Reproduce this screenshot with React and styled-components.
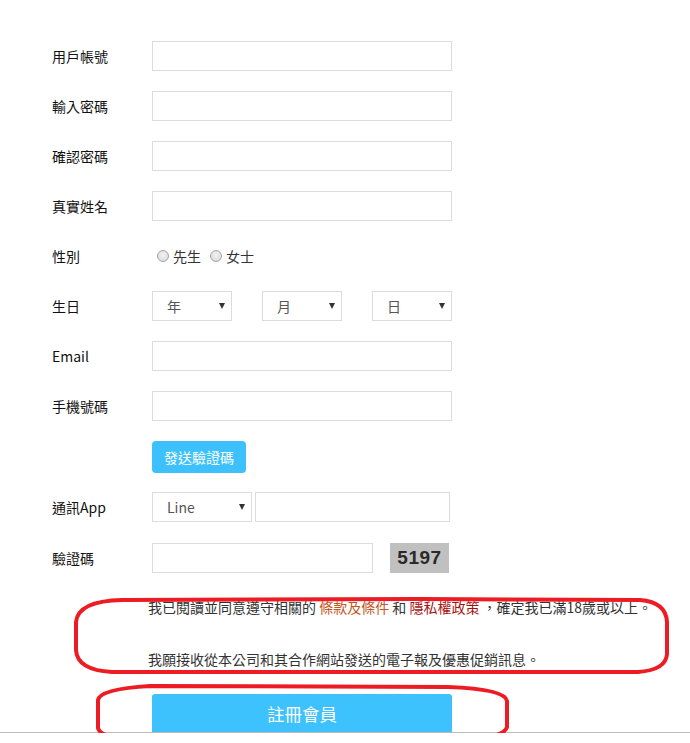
import React from 'react'
import styled, { createGlobalStyle } from 'styled-components'

const GlobalStyle = createGlobalStyle`
  html, body {
    margin: 0;
    padding: 0;
    background: #fff;
  }
  body {
    font-family: "Noto Sans CJK TC", "Noto Sans", sans-serif;
    color: #222;
  }
  * {
    box-sizing: border-box;
  }
`

const Page = styled.div`
  position: relative;
  width: 690px;
  border-bottom: 1px solid #bbb;
`

const Form = styled.form`
  display: flex;
  flex-direction: column;
  gap: 20px;
  padding: 41px 0 0 52px;
`

const Row = styled.div`
  display: flex;
  align-items: center;
  height: ${(p) => p.$h || 30}px;
  margin-top: ${(p) => p.$mt || 0}px;
`

const Label = styled.label`
  width: 100px;
  flex-shrink: 0;
  font-size: 14px;
  color: #111;
`

const Input = styled.input`
  width: ${(p) => p.$w || 300}px;
  height: 30px;
  margin-left: ${(p) => p.$ml || 0}px;
  border: 1px solid #dcdcdc;
  border-radius: 0;
  padding: 0 8px;
  font-size: 14px;
  outline: none;
`

const RadioGroup = styled.div`
  display: flex;
  align-items: center;
  padding-left: 5px;
  font-size: 14px;
  color: #333;
`

const RadioLabel = styled.label`
  display: flex;
  align-items: center;
  margin-right: 9px;
`

const Radio = styled.input`
  appearance: none;
  width: 12px;
  height: 12px;
  margin: 0 4px 0 0;
  border: 1px solid #a6a6a6;
  border-radius: 50%;
  background: radial-gradient(circle at 50% 40%, #f2f2f2 0%, #d6d6d6 100%);
`

const SelectGroup = styled.div`
  display: flex;
  justify-content: space-between;
  width: 300px;
`

const SelectWrap = styled.div`
  position: relative;
  width: ${(p) => p.$w || 80}px;
  height: 30px;

  &::after {
    content: '';
    position: absolute;
    right: 7px;
    top: 12px;
    border-left: 3.5px solid transparent;
    border-right: 3.5px solid transparent;
    border-top: 6px solid #333;
    pointer-events: none;
  }
`

const Select = styled.select`
  appearance: none;
  width: 100%;
  height: 100%;
  border: 1px solid #dcdcdc;
  border-radius: 0;
  background: #fff;
  padding: 0 0 0 14px;
  font-family: inherit;
  font-size: 14px;
  color: #555;
  outline: none;
`

const SendButton = styled.button`
  margin-left: 100px;
  height: 32px;
  padding: 0 12px;
  border: none;
  border-radius: 4px;
  background: #3cc1fc;
  color: #fff;
  font-family: inherit;
  font-size: 14px;
`

const Captcha = styled.div`
  margin-left: 17px;
  width: 59px;
  height: 30px;
  display: flex;
  align-items: center;
  justify-content: center;
  background: #c0c0c0;
  font-family: "Liberation Sans", Arial, sans-serif;
  font-weight: bold;
  font-size: 19px;
  color: #2a2a2a;
  letter-spacing: 0.5px;
`

const Agreement = styled.div`
  margin-left: 96px;
  margin-top: 4px;
  font-size: 14px;
  line-height: 20px;
  color: #333;

  p {
    margin: 0;
  }
  p + p {
    margin-top: 32px;
  }
`

const Link = styled.a`
  color: ${(p) => p.$color};
  text-decoration: none;
`

const SubmitButton = styled.button`
  margin: 5px 0 0 100px;
  width: 300px;
  height: 38px;
  border: none;
  border-radius: 3px 3px 0 0;
  background: #3dc2fd;
  color: #fff;
  font-family: inherit;
  font-size: 17.5px;
`

const Marks = styled.svg`
  position: absolute;
  left: 0;
  top: 0;
  width: 690px;
  height: 743px;
  pointer-events: none;
  overflow: visible;
`

function App() {
  return (
    <>
      <GlobalStyle />
      <Page>
        <Form onSubmit={(e) => e.preventDefault()}>
          <Row>
            <Label>用戶帳號</Label>
            <Input />
          </Row>
          <Row>
            <Label>輸入密碼</Label>
            <Input type="password" />
          </Row>
          <Row>
            <Label>確認密碼</Label>
            <Input type="password" />
          </Row>
          <Row>
            <Label>真實姓名</Label>
            <Input />
          </Row>
          <Row>
            <Label>性別</Label>
            <RadioGroup>
              <RadioLabel>
                <Radio type="radio" name="gender" />
                先生
              </RadioLabel>
              <RadioLabel>
                <Radio type="radio" name="gender" />
                女士
              </RadioLabel>
            </RadioGroup>
          </Row>
          <Row>
            <Label>生日</Label>
            <SelectGroup>
              <SelectWrap>
                <Select defaultValue="年">
                  <option>年</option>
                </Select>
              </SelectWrap>
              <SelectWrap>
                <Select defaultValue="月">
                  <option>月</option>
                </Select>
              </SelectWrap>
              <SelectWrap>
                <Select defaultValue="日">
                  <option>日</option>
                </Select>
              </SelectWrap>
            </SelectGroup>
          </Row>
          <Row>
            <Label>Email</Label>
            <Input type="email" />
          </Row>
          <Row>
            <Label>手機號碼</Label>
            <Input />
          </Row>
          <Row $h={32}>
            <SendButton type="button">發送驗證碼</SendButton>
          </Row>
          <Row $mt={-1}>
            <Label>通訊App</Label>
            <SelectWrap $w={100}>
              <Select defaultValue="Line">
                <option>Line</option>
                <option>WeChat</option>
              </Select>
            </SelectWrap>
            <Input $w={195} $ml={3} />
          </Row>
          <Row $mt={1}>
            <Label>驗證碼</Label>
            <Input $w={221} />
            <Captcha>5197</Captcha>
          </Row>
          <Agreement>
            <p>
              我已閱讀並同意遵守相關的 <Link href="#" $color="#c4561f">條款及條件</Link> 和{' '}
              <Link href="#" $color="#a3120f">隱私權政策</Link> ，確定我已滿18歲或以上。
            </p>
            <p>我願接收從本公司和其合作網站發送的電子報及優惠促銷訊息。</p>
          </Agreement>
          <SubmitButton type="submit">註冊會員</SubmitButton>
        </Form>
        <Marks viewBox="0 0 690 743">
          <path
            d="M 122 600 L 420 599 L 640 600 Q 666 602 667 622 L 667 654 Q 666 670 638 672 L 112 672 Q 77 670 76 650 L 76 622 Q 78 601 122 600 Z"
            fill="none"
            stroke="#ed1c24"
            strokeWidth="4"
          />
          <path
            d="M 150 686 L 448 687 Q 505 689 507 701 L 507 727 Q 505 737 468 739 L 138 740 Q 100 738 98 728 L 98 700 Q 100 689 150 686 Z"
            fill="none"
            stroke="#ed1c24"
            strokeWidth="4"
          />
        </Marks>
      </Page>
    </>
  )
}

export default App
